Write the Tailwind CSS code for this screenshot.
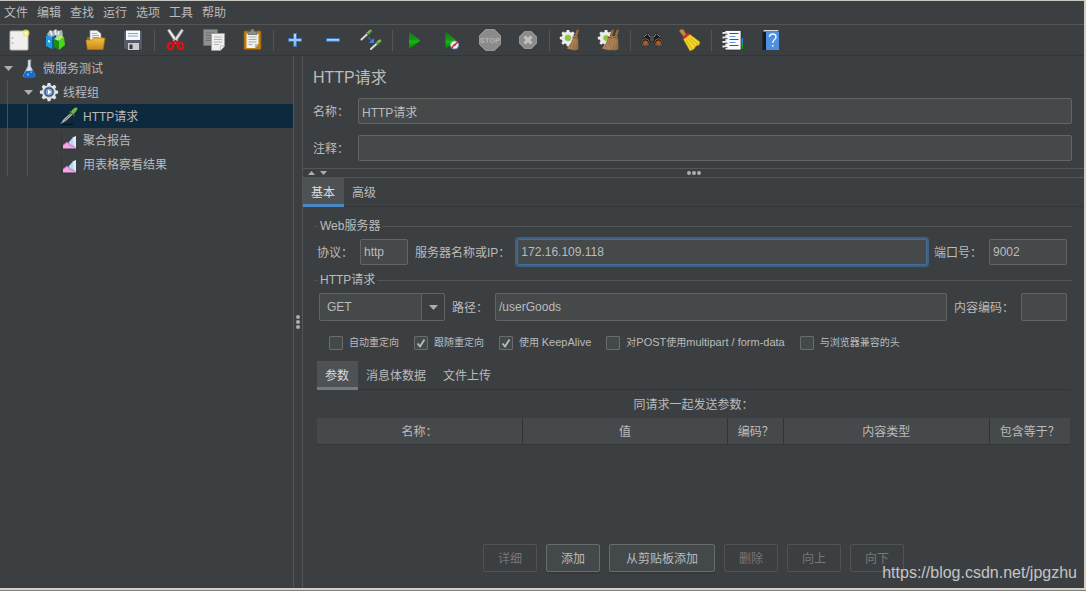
<!DOCTYPE html>
<html lang="zh-CN">
<head>
<meta charset="utf-8">
<title>HTTP请求</title>
<script src="https://cdn.jsdelivr.net/npm/@tailwindcss/browser@4"></script>
</head>
<body class="flex h-screen flex-col overflow-hidden border-b border-[#808080] bg-[#3c3f41] font-['Liberation_Sans','Noto_Sans_CJK_SC',sans-serif] text-[12px] leading-4 text-[#bbbbbb]">
<svg class="absolute size-0" aria-hidden="true">
  <defs>
    <linearGradient id="green" x1="0" y1="0" x2="0" y2="1"><stop offset="0" stop-color="#1d6b1f"/><stop offset=".5" stop-color="#1b9a1b"/><stop offset=".55" stop-color="#07c507"/><stop offset="1" stop-color="#047a04"/></linearGradient>
    <linearGradient id="gold" x1="0" y1="0" x2="0" y2="1"><stop offset="0" stop-color="#f3bf45"/><stop offset="1" stop-color="#c98a14"/></linearGradient>
    <linearGradient id="plus" x1="0" y1="0" x2="0" y2="1"><stop offset="0" stop-color="#c4dcf5"/><stop offset="1" stop-color="#7aaee6"/></linearGradient>
    <linearGradient id="straw" x1="0" y1="0" x2="1" y2="1"><stop offset="0" stop-color="#d0a877"/><stop offset="1" stop-color="#8d6439"/></linearGradient>
    <linearGradient id="bulb" x1="0" y1="0" x2="1" y2="1"><stop offset="0" stop-color="#9bd476"/><stop offset="1" stop-color="#3f8a2a"/></linearGradient>
    <symbol id="gear" viewBox="0 0 20 20"><path d="M8.6 1h2.8l.5 2.4 1.5.6 2-1.3 2 2-1.3 2 .6 1.5 2.4.5v2.8l-2.4.5-.6 1.5 1.3 2-2 2-2-1.3-1.5.6-.5 2.4H8.6l-.5-2.4-1.5-.6-2 1.3-2-2 1.3-2-.6-1.5L.9 11.500V8.700l2.400-.5.6-1.500-1.300-2 2-2 2 1.300 1.500-.6z"/></symbol>
    <symbol id="broom" viewBox="0 0 14 22"><path d="M10.500 1.500 13 1 11 9 8.500 8z" fill="#9a6835"/><path d="M7 7.500 12 9 12.500 21 8 22 1 20 5 14z" fill="url(#straw)"/><path d="M7.500 10 4 19M9 10 7 21M11 10.500V21" stroke="#8a6239" stroke-width=".6" fill="none"/><path d="m6.500 8.500 5.500 1.700" stroke="#6e4a27"/></symbol>
    <symbol id="report" viewBox="0 0 20 20"><path d="M2.500 2v16H19" fill="none" stroke="#2c2e30" stroke-width=".7"/><path d="M4 17.500V14l4-3 4 3 5-8.500v12z" fill="#f0a9e2"/><path d="M9.500 11.500 13 7.500l4-1.500V14l-3 1-3-1.500z" fill="#b9d6f5"/><path d="M13.500 6.500 17 5v12.500l-2-3z" fill="#dcecfb"/><path d="M4 14.500 8 11l3 3.500 3 .500 3 2.500" fill="none" stroke="#d45cc0" stroke-width=".8"/></symbol>
  </defs>
</svg>

<div class="flex min-h-0 flex-1 flex-col border-t border-r-2 border-b-2 border-t-[#c8c8c0] border-r-[#d4d0c8] border-b-[#d4d0c8]">
  <nav class="flex h-6 shrink-0 items-center gap-px border-b border-[#555555]">
    <button class="px-1">文件</button><button class="px-1">编辑</button><button class="px-1">查找</button><button class="px-1">运行</button><button class="px-1">选项</button><button class="px-1">工具</button><button class="px-1">帮助</button>
  </nav>

  <div role="toolbar" class="flex h-[31px] shrink-0 items-center border-b border-[#323435]">
    <button aria-label="新建" class="flex w-[38px] justify-center"><svg class="size-6" viewBox="0 0 24 24"><rect x="3" y="3" width="18" height="19" rx="1" fill="#efefed" stroke="#b9b9b5" stroke-width="1"/><path d="M5.500 9.500v1M5.500 14.500v1" stroke="#888" stroke-width="1.500"/><circle cx="19" cy="5" r="3.500" fill="#f3ea5d" opacity=".75"/><circle cx="19" cy="5" r="1.500" fill="#fffde0"/></svg></button>
    <button aria-label="模板" class="flex w-[38px] justify-center"><svg class="size-6" viewBox="0 0 24 24"><path d="m2 6 3-4 3 1 3-2 2 2 4-1 1 5-3 4-9 1z" fill="#aab4b8"/><path d="m5 3 2 4M10 2l1 5M14 3l-1 4" stroke="#eef2f3" stroke-width="1.500"/><path d="m1 7 6 2v12l-6-3z" fill="#1c9be0"/><path d="m7 9 4-2v12l-4 2z" fill="#0b61a8"/><path d="m3 12 2 .800v2L3 14z" fill="#e6f5ff"/><path d="m9 11 5 2v9l-5-3z" fill="#1c8b12"/><path d="m9 11 6-4 4 2-5 4z" fill="#a6f06a"/><path d="m14 13 5-4 1 8-6 5z" fill="#4fd41d"/></svg></button>
    <button aria-label="打开" class="flex w-[38px] justify-center"><svg class="size-6" viewBox="0 0 24 24"><path d="M4 9h16v11H4z" fill="#9c6a14"/><path d="M7 2.500h7l4 3V14H7z" fill="#f2f2f0" stroke="#999" stroke-width=".6"/><path d="M9 5.500h5M9 7.500h7M9 9.500h7" stroke="#9b9b9b" stroke-width=".8"/><path d="M3 12h6l2-2h11l-2 11.500H4.500z" fill="url(#gold)" stroke="#b07a15" stroke-width=".7"/></svg></button>
    <button aria-label="保存" class="flex w-[38px] justify-center"><svg class="size-6" viewBox="0 0 24 24"><path d="M3 2.500h18.500V22H4.500L2.500 20V3z" fill="#565a66" stroke="#34363e" stroke-width=".8"/><path d="M5 2.500h14V12H5z" fill="#f5f8fc"/><path d="M7 5.500h10M7 8h10" stroke="#7ea3d8"/><path d="M7 15h11v7H7z" fill="#c9cbcf"/><path d="M8.500 16.500h3V21h-3z" fill="#33353b"/></svg></button>
    <span class="mx-[2px] h-[21px] w-px bg-[#555555]"></span>
    <button aria-label="剪切" class="flex w-[38px] justify-center"><svg class="size-6" viewBox="0 0 24 24"><path d="M3.500 2.500 5.500 1 14 13l-2 2.500z" fill="#e9ebec" stroke="#8d9193" stroke-width=".6"/><path d="M19.500 2.500 17.500 1 9 13l2 2.500z" fill="#d9dddf" stroke="#8d9193" stroke-width=".6"/><g fill="none" stroke="#dd1313" stroke-width="2.400"><ellipse cx="6.500" cy="18" rx="2.700" ry="3.200" transform="rotate(30 6.500 18)"/><ellipse cx="16.500" cy="18" rx="2.700" ry="3.200" transform="rotate(-30 16.500 18)"/></g><path d="m8.500 15.500 3-2.500 3 2.500" fill="none" stroke="#c00d0d" stroke-width="2"/></svg></button>
    <button aria-label="复制" class="flex w-[38px] justify-center"><svg class="size-6" viewBox="0 0 24 24"><path d="M1.500 1.500h14v16h-14z" fill="#8f9190" stroke="#6c6e6e"/><path d="M4 5h9M4 7.500h9M4 10h5M4 12.500h5" stroke="#6f7171"/><path d="M9.500 5.500h13V18l-4 4.500h-9z" fill="#eeeeec" stroke="#9d9d9b" stroke-width=".8"/><path d="M12 9h8M12 11.500h8M12 14h8M12 16.500h5" stroke="#b5b5b3"/><path d="M22.500 18h-4v4.500z" fill="#fff" stroke="#9d9d9b" stroke-width=".6"/></svg></button>
    <button aria-label="粘贴" class="flex w-[38px] justify-center"><svg class="size-6" viewBox="0 0 24 24"><rect x="4" y="3" width="17" height="18.500" rx="1" fill="#c17d11" stroke="#8f5902" stroke-width=".8"/><path d="M6.500 5.500h12V16l-3.500 4H6.500z" fill="#f1f1ef"/><path d="M8.500 9h8M8.500 11.500h8M8.500 14h8M8.500 16.500h4" stroke="#aaa"/><path d="M18.500 16H15v4z" fill="#bdbdbb"/><path d="M8 3.500h2.500l1-2.500h2l1 2.500H17v3H8z" fill="#8b8d88" stroke="#5c5e5a" stroke-width=".7"/></svg></button>
    <span class="mx-[2px] h-[21px] w-px bg-[#555555]"></span>
    <button aria-label="展开" class="flex w-[38px] justify-center"><svg class="size-6" viewBox="0 0 24 24"><path d="M10.500 5.500h3v5h5v3h-5v5h-3v-5h-5v-3h5z" fill="url(#plus)" stroke="#3a76c0"/></svg></button>
    <button aria-label="折叠" class="flex w-[38px] justify-center"><svg class="size-6" viewBox="0 0 24 24"><path d="M5.500 10.500h13v3h-13z" fill="url(#plus)" stroke="#3a76c0"/></svg></button>
    <button aria-label="切换" class="flex w-[38px] justify-center"><svg class="size-6" viewBox="0 0 24 24"><g stroke-linecap="round"><path d="m2.500 11.500 6-5.500" stroke="#e6e6e4" stroke-width="2"/><path d="m3.500 11.500 5-4.500" stroke="#8b8b88" stroke-width=".6"/><path d="m9 5.500 2.500-2.500" stroke="url(#bulb)" stroke-width="3"/><path d="m7.500 4.500 3 3" stroke="#51713f"/><path d="m12 21 6-5.500" stroke="#e6e6e4" stroke-width="2"/><path d="m13 21 5-4.500" stroke="#8b8b88" stroke-width=".6"/><path d="m18.500 15 2.500-2" stroke="url(#bulb)" stroke-width="3"/><path d="m17 13.500 3 3.500" stroke="#51713f"/></g><path d="m9.500 9.500 4 4" stroke="#2f74d0" stroke-width="1.500" stroke-dasharray="1.800 .8"/><path d="M15 10v5h-5z" fill="#3d86e6"/></svg></button>
    <span class="mx-[2px] h-[21px] w-px bg-[#555555]"></span>
    <button aria-label="启动" class="flex w-[38px] justify-center"><svg class="size-6" viewBox="0 0 24 24"><path d="m7 3.500 11.500 9L7 21z" fill="url(#green)"/></svg></button>
    <button aria-label="不停顿启动" class="flex w-[38px] justify-center"><svg class="size-6" viewBox="0 0 24 24"><path d="m5.500 3.500 11 9-11 8.500z" fill="url(#green)"/><circle cx="14.500" cy="17" r="4" fill="#f4f6fa" stroke="#7ba0cf"/><path d="m12.500 17.500 2-2M15 18l1.500-1.500" stroke="#6d8fc0"/><path d="m11 20.500 7-7" stroke="#e02020" stroke-width="1.500"/></svg></button>
    <button aria-label="停止" class="flex w-[38px] justify-center"><svg class="size-6" viewBox="0 0 24 24"><path d="M7.500 1.500h9l6 6v9l-6 6h-9l-6-6v-9z" fill="#8b8b8b" stroke="#979797"/><text x="12" y="15" text-anchor="middle" font-family="Roboto, Liberation Sans" font-size="8" font-weight="bold" fill="#b0b0b0">STOP</text></svg></button>
    <button aria-label="关闭" class="flex w-[38px] justify-center"><svg class="size-6" viewBox="0 0 24 24"><path d="M8.500 3.500h7l5 5v7l-5 5h-7l-5-5v-7z" fill="#8b8b8b" stroke="#949494"/><path d="m8.500 8.500 7 7m0-7-7 7" stroke="#c2c2c2" stroke-width="3"/></svg></button>
    <span class="mx-[2px] h-[21px] w-px bg-[#555555]"></span>
    <button aria-label="清除" class="flex w-[38px] justify-center"><svg class="size-6" viewBox="0 0 24 24"><use href="#gear" x="0" y="1" width="18" height="18" fill="#ececea"/><circle cx="9" cy="10" r="3" fill="#7ed321" stroke="#a9b3a0"/><use href="#broom" x="7" y="0" width="14" height="23"/></svg></button>
    <button aria-label="清除全部" class="flex w-[38px] justify-center"><svg class="size-6" viewBox="0 0 24 24"><use href="#gear" x="0" y="1" width="18" height="18" fill="#ececea"/><circle cx="9" cy="10" r="2.500" fill="#7ed321" stroke="#a9b3a0"/><use href="#broom" x="4" y="0" width="14" height="23"/><use href="#broom" x="9" y="0" width="14" height="23"/></svg></button>
    <span class="mx-[2px] h-[21px] w-px bg-[#555555]"></span>
    <button aria-label="查找" class="flex w-[38px] justify-center"><svg class="size-6" viewBox="0 0 24 24"><path d="M5 6.500 8 5l3 3v6l-3 2-6-2zM19 6.500 16 5l-3 3v6l3 2 6-2z" fill="#1b1b1b"/><path d="M10 8h4v5h-4z" fill="#4a4a4a"/><path d="m4 9 3-3M20 9l-3-3M8 6l2 3M16 6l-2 3" stroke="#9a9a9a" stroke-width=".9"/><circle cx="5.500" cy="14.500" r="4" fill="#2a1a10" stroke="#161616" stroke-width="1.200"/><circle cx="18.500" cy="14.500" r="4" fill="#2a1a10" stroke="#161616" stroke-width="1.200"/><circle cx="5.500" cy="15" r="2.500" fill="#a85c2e"/><circle cx="18.500" cy="15" r="2.500" fill="#a85c2e"/><circle cx="5.500" cy="14.500" r="3.800" fill="none" stroke="#8a8a8a" stroke-width=".7"/><circle cx="18.500" cy="14.500" r="3.800" fill="none" stroke="#8a8a8a" stroke-width=".7"/></svg></button>
    <button aria-label="重置查找" class="flex w-[38px] justify-center"><svg class="size-6" viewBox="0 0 24 24"><path d="M1.500 3.500C1.500 1 5 .500 6 2.500L8.500 7 6 9z" fill="#c58a3a" stroke="#8e5f22" stroke-width=".6"/><path d="m4.500 9.500 5.500-5 3 3-6.500 5z" fill="#d92424"/><path d="m5.500 11.500 6.500-5L22 14l-1 3-3 1-2 3-4 2z" fill="#f4d62c" stroke="#b2910c" stroke-width=".6"/><path d="m8 12 6 9M10 10.500l7.500 8M11.500 9l9 8" stroke="#c9a412" stroke-width=".9"/></svg></button>
    <span class="mx-[2px] h-[21px] w-px bg-[#555555]"></span>
    <button aria-label="函数助手" class="flex w-[38px] justify-center"><svg class="size-6" viewBox="0 0 24 24"><path d="M19 10h3v6h-3z" fill="#2a7fe0"/><path d="M19 16h3v5h-3z" fill="#14a514"/><path d="M4 2.500h16V22H4z" fill="#f7f9fc" stroke="#222" stroke-width=".7"/><path d="M8.500 5.500h9M8.500 11.500h9M8.500 17.500h9" stroke="#1b5cb0"/><path d="M8.500 8.500h6M8.500 14.500h6" stroke="#6b9ad6"/><path d="M1.500 5h4M1.500 9.500h4M1.500 14h4M1.500 18.500h4" stroke="#e8e8e8" stroke-width="2"/><path d="M3.500 6.200h3M3.500 10.700h3M3.500 15.200h3M3.500 19.700h3" stroke="#222" stroke-width=".8"/></svg></button>
    <button aria-label="帮助" class="flex w-[38px] justify-center"><svg class="size-6" viewBox="0 0 24 24"><path d="M3.500 3.500 5 2h15v19l-1 1H3.500z" fill="#17191c"/><path d="M5 2h15l-1.500 1.500H4z" fill="#d5d9de"/><path d="M7 3.500h13V22H7z" fill="#4d8fe0"/><path d="M10.500 9c0-4 6.500-4 6.500 0 0 2.500-3.300 2.500-3.300 6" fill="none" stroke="#fff" stroke-width="1.300"/><path d="M13 17h1.500v1.500H13z" fill="#fff"/></svg></button>
  </div>

  <div class="flex min-h-0 flex-1">
    <aside class="w-[294px] shrink-0 border-r border-[#555555]">
      <ul role="tree" class="[&_li>span:last-child]:pt-0.5">
        <li role="treeitem" class="flex h-6 items-center">
          <svg class="ml-1 h-[5px] w-[9px]" viewBox="0 0 9 5"><path d="M0 0h9L4.500 5z" fill="#adadad"/></svg>
          <svg class="ml-[6px] size-5" viewBox="0 0 20 20"><path d="M9 2h3l-.5 6 4.500 9c.3 1-.3 2-1 2H5.500c-1 0-1.300-1-1-2L9 8z" fill="#dbe6ee" stroke="#8fa1ad" stroke-width=".6"/><path d="m7 13 7-.5 2 4.500c.3 1-.3 2-1 2H5.500c-1 0-1.300-1-1-2z" fill="#1769d2"/><path d="M8 15.500h2v2H8zM11.500 13.500h1.500v1.500h-1.500z" fill="#6db2f5"/><path d="M11.500 1v5" stroke="#8a9398" stroke-width=".8"/></svg>
          <span class="ml-1">微服务测试</span>
        </li>
        <li role="treeitem" class="flex h-6 items-center">
          <span class="ml-[7px] h-full w-px bg-[#555555]"></span>
          <svg class="ml-4 h-[5px] w-[9px]" viewBox="0 0 9 5"><path d="M0 0h9L4.500 5z" fill="#adadad"/></svg>
          <svg class="ml-[6px] size-5" viewBox="0 0 20 20"><use href="#gear" x="0" y="0" width="20" height="20" fill="#e4e5e6"/><circle cx="10" cy="10" r="5" fill="#27456f" stroke="#7f93b3"/><circle cx="10" cy="10" r="3.500" fill="#7aa0d8"/><path d="m9 7.500 3.500 2.500L9 12.500z" fill="#fff"/></svg>
          <span class="ml-1">线程组</span>
        </li>
        <li role="treeitem" aria-selected="true" class="flex h-6 items-center bg-[#0d293e]">
          <span class="ml-[7px] h-full w-px bg-[#4a5052]"></span><span class="ml-[19px] h-full w-px bg-[#4a5052]"></span>
          <svg class="ml-[31px] size-5" viewBox="0 0 20 20"><path d="M3 18.500h11" stroke="#06141f" stroke-width="1.500"/><path d="M2 17.500 5 13l7-6 1.500 1.500-7 6.500z" fill="#d9dcda" stroke="#7f8582" stroke-width=".7"/><path d="m5 14.500 7-6" stroke="#4b504e" stroke-width=".8"/><path d="m11 5.500 4 4" stroke="#2c6321" stroke-width="1.800" stroke-linecap="round"/><path d="M12 6c1.500-3 4-5 6-4.500 1.500 1.500-1 5-4 7z" fill="url(#bulb)"/></svg>
          <span class="ml-1">HTTP请求</span>
        </li>
        <li role="treeitem" class="flex h-6 items-center">
          <span class="ml-[7px] h-full w-px bg-[#555555]"></span><span class="ml-[19px] h-full w-px bg-[#555555]"></span>
          <svg class="ml-[31px] size-5" viewBox="0 0 20 20"><use href="#report" width="20" height="22"/></svg>
          <span class="ml-1">聚合报告</span>
        </li>
        <li role="treeitem" class="flex h-6 items-center">
          <span class="ml-[7px] h-full w-px bg-[#555555]"></span><span class="ml-[19px] h-full w-px bg-[#555555]"></span>
          <svg class="ml-[31px] size-5" viewBox="0 0 20 20"><use href="#report" width="20" height="22"/></svg>
          <span class="ml-1">用表格察看结果</span>
        </li>
      </ul>
    </aside>

    <div class="flex w-2 shrink-0 flex-col items-center justify-center gap-px">
      <span class="size-1 rounded-full bg-[#adadad]"></span><span class="size-1 rounded-full bg-[#adadad]"></span><span class="size-1 rounded-full bg-[#adadad]"></span>
    </div>

    <main class="flex min-w-0 flex-1 flex-col border-l border-[#555555]">
      <section class="flex flex-col pt-[10px] pr-3 pb-[7px] pl-[10px]">
        <h1 class="pb-2 text-[16px] leading-6">HTTP请求</h1>
        <div class="flex flex-col gap-[11px]">
          <div class="flex items-center"><label for="name" class="w-[45px] shrink-0 pt-0.5">名称：</label><input id="name" value="HTTP请求" class="h-[26px] min-w-0 flex-1 rounded-[2px] border border-[#646464] bg-[#45494a] px-[3px] outline-none"></div>
          <div class="flex items-center"><label for="comment" class="w-[45px] shrink-0 pt-0.5">注释：</label><input id="comment" class="h-[26px] min-w-0 flex-1 rounded-[2px] border border-[#646464] bg-[#45494a] px-[3px] outline-none"></div>
        </div>
      </section>

      <div class="grid h-[10px] shrink-0 grid-cols-[1fr_auto_1fr] items-center border-y border-[#555555]">
        <div class="flex gap-[5px] pl-[5px]">
          <svg class="h-1 w-[7px]" viewBox="0 0 7 4"><path d="M3.500 0 7 4H0z" fill="#adadad"/></svg>
          <svg class="h-1 w-[7px]" viewBox="0 0 7 4"><path d="M0 0h7L3.500 4z" fill="#adadad"/></svg>
        </div>
        <div class="flex gap-px"><span class="size-1 rounded-full bg-[#adadad]"></span><span class="size-1 rounded-full bg-[#adadad]"></span><span class="size-1 rounded-full bg-[#adadad]"></span></div>
      </div>

      <div role="tablist" class="flex h-[29px] shrink-0 items-start border-b border-[#323435]">
        <button role="tab" aria-selected="true" class="h-[29px] border-b-3 border-[#4a88c7] bg-[#4e5254] pt-[3px] pr-[9px] pl-2 text-[#dddddd]">基本</button>
        <button role="tab" class="h-[29px] border-b-3 border-transparent pt-[3px] pr-[9px] pl-2">高级</button>
      </div>

      <form class="flex min-h-0 flex-1 flex-col pt-[11px] pr-3 pb-4 pl-3" onsubmit="return false">
        <fieldset class="min-w-0 border-t border-[#555555]">
          <legend class="ml-[3px] px-[2px]">Web服务器</legend>
          <div class="flex items-center pt-[3px] pr-[5px] pl-[2px]">
            <label for="protocol" class="pt-0.5 pr-[7px] whitespace-nowrap">协议：</label>
            <input id="protocol" value="http" class="h-[26px] w-12 rounded-[2px] border border-[#646464] bg-[#45494a] px-[3px] outline-none">
            <label for="server" class="pt-0.5 pr-[5px] pl-[7px] whitespace-nowrap">服务器名称或IP：</label>
            <input id="server" value="172.16.109.118" class="h-[30px] min-w-0 flex-1 rounded-[4px] border-2 border-[#3d6185] bg-[#45494a] px-1 ring-1 ring-[#466d94] outline-none ring-inset">
            <label for="port" class="pt-0.5 pr-[7px] pl-[5px] whitespace-nowrap">端口号：</label>
            <input id="port" value="9002" class="h-[26px] w-[78px] rounded-[2px] border border-[#646464] bg-[#45494a] px-[3px] outline-none">
          </div>
        </fieldset>

        <fieldset class="mt-[5px] min-w-0 border-t border-[#555555]">
          <legend class="ml-[3px] px-[2px]">HTTP请求</legend>
          <div class="flex items-center pt-[5px] pr-[5px] pl-1">
            <div class="relative h-7 w-[126px] shrink-0">
              <select aria-label="方法" class="size-full appearance-none rounded-[2px] border border-[#646464] bg-[#45494a] px-[7px] outline-none"><option>GET</option><option>POST</option></select>
              <span class="pointer-events-none absolute inset-y-px right-px flex w-[23px] items-center justify-center border-l border-[#646464] bg-[#3c3f41]"><svg class="h-[5px] w-[9px]" viewBox="0 0 9 5"><path d="M0 0h9L4.500 5z" fill="#adadad"/></svg></span>
            </div>
            <label for="path" class="px-[7px] pt-0.5 whitespace-nowrap">路径：</label>
            <input id="path" value="/userGoods" class="h-7 min-w-0 flex-1 rounded-[2px] border border-[#646464] bg-[#45494a] px-[3px] outline-none">
            <label for="encoding" class="px-[7px] pt-0.5 whitespace-nowrap">内容编码：</label>
            <input id="encoding" class="h-7 w-[46px] rounded-[2px] border border-[#646464] bg-[#45494a] px-[3px] outline-none">
          </div>
        </fieldset>

        <div class="mt-[14px] flex gap-[15px] pl-[14px] text-[10px] leading-[14px] whitespace-nowrap">
          <label class="relative flex items-center gap-[6px]"><input type="checkbox" class="peer size-[14px] appearance-none rounded-[1px] border border-[#6b6b6b] bg-[#43494a]"><svg class="pointer-events-none absolute left-0 hidden size-[14px] peer-checked:block" viewBox="0 0 14 14"><path d="m3.500 7.500 2.500 3 4.500-7" fill="none" stroke="#bbbbbb" stroke-width="1.800"/></svg>自动重定向</label>
          <label class="relative flex items-center gap-[6px]"><input type="checkbox" checked class="peer size-[14px] appearance-none rounded-[1px] border border-[#6b6b6b] bg-[#43494a]"><svg class="pointer-events-none absolute left-0 hidden size-[14px] peer-checked:block" viewBox="0 0 14 14"><path d="m3.500 7.500 2.500 3 4.500-7" fill="none" stroke="#bbbbbb" stroke-width="1.800"/></svg>跟随重定向</label>
          <label class="relative flex items-center gap-[6px]"><input type="checkbox" checked class="peer size-[14px] appearance-none rounded-[1px] border border-[#6b6b6b] bg-[#43494a]"><svg class="pointer-events-none absolute left-0 hidden size-[14px] peer-checked:block" viewBox="0 0 14 14"><path d="m3.500 7.500 2.500 3 4.500-7" fill="none" stroke="#bbbbbb" stroke-width="1.800"/></svg><span>使用 <span class="text-[11px]">KeepAlive</span></span></label>
          <label class="relative flex items-center gap-[6px]"><input type="checkbox" class="peer size-[14px] appearance-none rounded-[1px] border border-[#6b6b6b] bg-[#43494a]"><svg class="pointer-events-none absolute left-0 hidden size-[14px] peer-checked:block" viewBox="0 0 14 14"><path d="m3.500 7.500 2.500 3 4.500-7" fill="none" stroke="#bbbbbb" stroke-width="1.800"/></svg><span>对<span class="text-[11px]">POST</span>使用<span class="text-[11px]">multipart / form-data</span></span></label>
          <label class="relative flex items-center gap-[6px]"><input type="checkbox" class="peer size-[14px] appearance-none rounded-[1px] border border-[#6b6b6b] bg-[#43494a]"><svg class="pointer-events-none absolute left-0 hidden size-[14px] peer-checked:block" viewBox="0 0 14 14"><path d="m3.500 7.500 2.500 3 4.500-7" fill="none" stroke="#bbbbbb" stroke-width="1.800"/></svg>与浏览器兼容的头</label>
        </div>

        <div class="mt-[11px] flex min-h-0 flex-1 flex-col px-[2px]">
          <div role="tablist" class="flex h-[29px] shrink-0 items-start border-b border-[#323435]">
            <button type="button" role="tab" aria-selected="true" class="h-[29px] border-b-3 border-[#747a80] bg-[#4e5254] pt-[3px] pr-[9px] pl-2 text-[#dddddd]">参数</button>
            <button type="button" role="tab" class="h-[29px] border-b-3 border-transparent pt-[3px] pr-[9px] pl-2">消息体数据</button>
            <button type="button" role="tab" class="h-[29px] border-b-3 border-transparent pt-[3px] pr-[9px] pl-2">文件上传</button>
          </div>
          <table class="w-full table-fixed border-collapse">
            <caption class="pt-[7px] pb-[5px] text-center leading-4">同请求一起发送参数：</caption>
            <colgroup><col><col><col class="w-14"><col><col class="w-[81px]"></colgroup>
            <thead class="bg-[#45494b]">
              <tr class="h-[26px] border-b border-[#323435]">
                <th class="border-r border-[#323435] pt-0.5 font-normal">名称：</th>
                <th class="border-r border-[#323435] pt-0.5 font-normal">值</th>
                <th class="border-r border-[#323435] pt-0.5 font-normal whitespace-nowrap">编码？</th>
                <th class="border-r border-[#323435] pt-0.5 font-normal">内容类型</th>
                <th class="pt-0.5 font-normal whitespace-nowrap">包含等于？</th>
              </tr>
            </thead>
          </table>
          <div class="mt-auto flex justify-center gap-[9px]">
            <button type="button" disabled class="h-7 rounded-[2px] border border-[#515353] px-[14px] pt-0.5 text-[#777777]">详细</button>
            <button type="button" class="h-7 rounded-[2px] border border-[#6a6c6c] bg-[#43494a] px-[14px] pt-0.5 shadow-[0_2px_0_#363838]">添加</button>
            <button type="button" class="h-7 rounded-[2px] border border-[#6a6c6c] bg-[#43494a] px-4 pt-0.5 shadow-[0_2px_0_#363838]">从剪贴板添加</button>
            <button type="button" disabled class="h-7 rounded-[2px] border border-[#515353] px-[14px] pt-0.5 text-[#777777]">删除</button>
            <button type="button" disabled class="h-7 rounded-[2px] border border-[#515353] px-[14px] pt-0.5 text-[#777777]">向上</button>
            <button type="button" disabled class="h-7 rounded-[2px] border border-[#515353] px-[14px] pt-0.5 text-[#777777]">向下</button>
          </div>
        </div>
      </form>
    </main>
  </div>
</div>
<div class="pointer-events-none absolute right-[9px] bottom-2 text-[16px] leading-5 text-[#c4c5c6]">https://blog.csdn.net/jpgzhu</div>
</body>
</html>
